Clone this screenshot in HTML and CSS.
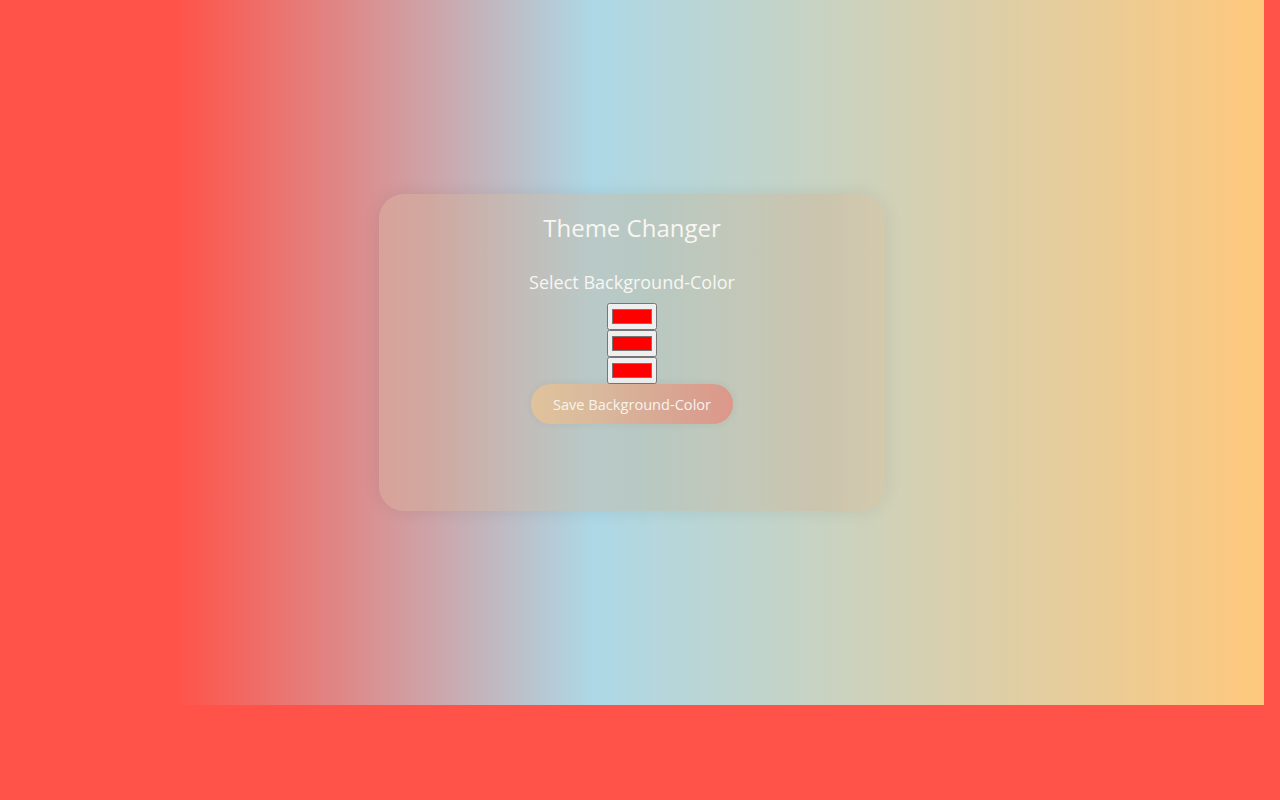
FILE: index.html
```html
<!DOCTYPE html>
<html lang="en">
<head>
<meta charset="utf-8">
<title>Theme Changer</title>
<link rel="stylesheet" href="styles.css">
</head>
<body>
<div class="stage">
  <div class="card">
    <h1 class="title">Theme Changer</h1>
    <h2 class="subtitle">Select Background-Color</h2>
    <input class="picker" type="color" value="#ff0000">
    <input class="picker" type="color" value="#ff0000">
    <input class="picker" type="color" value="#ff0000">
    <button class="save" type="button">Save Background-Color</button>
  </div>
</div>
</body>
</html>
```
FILE: styles.css
```css
html, body {
  margin: 0;
  padding: 0;
}
body {
  background: #ff5349;
  height: 800px;
  font-family: "Open Sans", "Noto Sans", sans-serif;
}
.stage {
  width: calc(100% - 16px);
  height: 705px;
  background: linear-gradient(to right, #ff5349 14%, #add8e6 47%, #fec87c 100%);
  display: flex;
  align-items: center;
  justify-content: center;
}
.card {
  width: 506px;
  height: 317px;
  box-sizing: border-box;
  border-radius: 25px;
  background: linear-gradient(to right,
    #d9a29a 0%,
    #d0a8a0 10%,
    #c4bab6 26%,
    #b8cac8 43%,
    #b8c8c2 53%,
    #c4c8b8 73%,
    #cac4ae 86%,
    #d3caad 100%);
  box-shadow: 0 0 18px rgba(0, 0, 0, 0.08);
  display: flex;
  flex-direction: column;
  align-items: center;
  padding-top: 16px;
  color: #fff;
}
.title {
  margin: 0;
  font-size: 24px;
  line-height: 36px;
  font-weight: 400;
  color: #f8f6f2;
}
.subtitle {
  margin: 24px 0 9px;
  font-size: 18px;
  line-height: 24px;
  font-weight: 400;
  color: #f8f6f2;
}
.picker {
  display: block;
  margin: 0;
  width: 50px;
  height: 27px;
}
.save {
  width: 202px;
  height: 40px;
  margin: 0;
  border: none;
  border-radius: 20px;
  background: linear-gradient(to right, rgba(253, 200, 124, 0.5), rgba(255, 83, 73, 0.42));
  box-shadow: 0 0 8px rgba(0, 0, 0, 0.06);
  color: #f7f3ee;
  font-family: "Open Sans", "Noto Sans", sans-serif;
  font-size: 14.6px;
  cursor: pointer;
}
```
